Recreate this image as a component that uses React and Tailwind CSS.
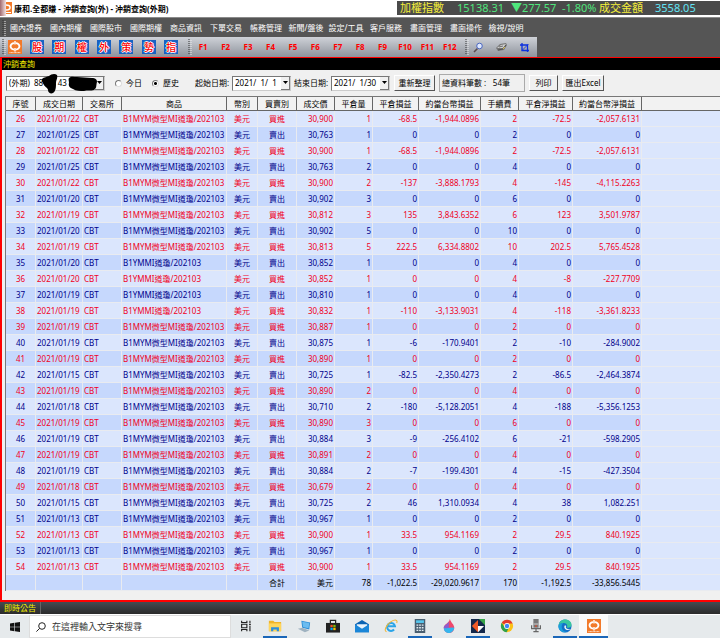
import React, { useState } from 'react';

const menus = [
  '國內證券', '國內期權', '國際股市', '國際期權', '商品資訊', '下單交易', '帳務管理',
  '新聞/盤後', '設定/工具', '客戶服務', '畫面管理', '畫面操作', '檢視/說明',
];

const shortcuts = ['股', '期', '權', '外', '策', '勢', '指'];
const fnKeys = ['F1', 'F2', 'F3', 'F4', 'F5', 'F6', 'F7', 'F8', 'F9', 'F10', 'F11', 'F12'];

const columns = [
  { label: '序號',           width: 'w-[30px]',  align: 'text-center' },
  { label: '成交日期',       width: 'w-[47px]',  align: 'text-left'   },
  { label: '交易所',         width: 'w-[39px]',  align: 'text-left'   },
  { label: '商品',           width: 'w-[105px]', align: 'text-left'   },
  { label: '幣別',           width: 'w-[31px]',  align: 'text-center' },
  { label: '買賣別',         width: 'w-[39px]',  align: 'text-center' },
  { label: '成交價',         width: 'w-[38px]',  align: 'text-right'  },
  { label: '平倉量',         width: 'w-[38px]',  align: 'text-right'  },
  { label: '平倉損益',       width: 'w-[46px]',  align: 'text-right'  },
  { label: '約當台幣損益',   width: 'w-[62px]',  align: 'text-right'  },
  { label: '手續費',         width: 'w-[38px]',  align: 'text-right'  },
  { label: '平倉淨損益',     width: 'w-[54px]',  align: 'text-right'  },
  { label: '約當台幣淨損益', width: 'w-[69px]',  align: 'text-right'  },
];

const MICRO = 'B1MYM微型MI道瓊/202103';
const MINI = 'B1YMMI道瓊/202103';

// no, day, product, price, qty, pl, pl (TWD), fee, net, net (TWD)
const trades = [
  [26, '22', MICRO, '30,900', '1', '-68.5', '-1,944.0896', '2', '-72.5', '-2,057.6131'],
  [27, '25', MICRO, '30,763', '1', '0', '0', '2', '0', '0'],
  [28, '22', MICRO, '30,900', '1', '-68.5', '-1,944.0896', '2', '-72.5', '-2,057.6131'],
  [29, '25', MICRO, '30,763', '2', '0', '0', '4', '0', '0'],
  [30, '22', MICRO, '30,900', '2', '-137', '-3,888.1793', '4', '-145', '-4,115.2263'],
  [31, '20', MICRO, '30,902', '3', '0', '0', '6', '0', '0'],
  [32, '19', MICRO, '30,812', '3', '135', '3,843.6352', '6', '123', '3,501.9787'],
  [33, '20', MICRO, '30,902', '5', '0', '0', '10', '0', '0'],
  [34, '19', MICRO, '30,813', '5', '222.5', '6,334.8802', '10', '202.5', '5,765.4528'],
  [35, '20', MINI, '30,852', '1', '0', '0', '4', '0', '0'],
  [36, '20', MINI, '30,852', '1', '0', '0', '4', '-8', '-227.7709'],
  [37, '19', MINI, '30,810', '1', '0', '0', '4', '0', '0'],
  [38, '19', MINI, '30,832', '1', '-110', '-3,133.9031', '4', '-118', '-3,361.8233'],
  [39, '19', MICRO, '30,887', '1', '0', '0', '2', '0', '0'],
  [40, '19', MICRO, '30,875', '1', '-6', '-170.9401', '2', '-10', '-284.9002'],
  [41, '19', MICRO, '30,890', '1', '0', '0', '2', '0', '0'],
  [42, '15', MICRO, '30,725', '1', '-82.5', '-2,350.4273', '2', '-86.5', '-2,464.3874'],
  [43, '19', MICRO, '30,890', '2', '0', '0', '4', '0', '0'],
  [44, '18', MICRO, '30,710', '2', '-180', '-5,128.2051', '4', '-188', '-5,356.1253'],
  [45, '19', MICRO, '30,890', '3', '0', '0', '6', '0', '0'],
  [46, '19', MICRO, '30,884', '3', '-9', '-256.4102', '6', '-21', '-598.2905'],
  [47, '19', MICRO, '30,891', '2', '0', '0', '4', '0', '0'],
  [48, '19', MICRO, '30,884', '2', '-7', '-199.4301', '4', '-15', '-427.3504'],
  [49, '18', MICRO, '30,679', '2', '0', '0', '4', '0', '0'],
  [50, '15', MICRO, '30,725', '2', '46', '1,310.0934', '4', '38', '1,082.251'],
  [51, '13', MICRO, '30,967', '1', '0', '0', '2', '0', '0'],
  [52, '13', MICRO, '30,900', '1', '33.5', '954.1169', '2', '29.5', '840.1925'],
  [53, '13', MICRO, '30,967', '1', '0', '0', '2', '0', '0'],
  [54, '13', MICRO, '30,900', '1', '33.5', '954.1169', '2', '29.5', '840.1925'],
];

const totals = ['', '', '', '', '', '合計', '美元', '78', '-1,022.5', '-29,020.9617', '170', '-1,192.5', '-33,856.5445'];

// Legs are listed in pairs; between 39 and 50 the buy leg has the odd number
function isBuy(no) {
  const flipped = no >= 39 && no <= 50;
  return no % 2 === (flipped ? 1 : 0);
}

const toCells = ([no, day, product, ...rest]) => [
  no, `2021/01/${day}`, 'CBT', product, '美元', isBuy(no) ? '買進' : '賣出', ...rest,
];

function BrandIcon({ className }) {
  return (
    <svg className={className} viewBox="0 0 14 14" aria-hidden="true">
      <rect width="14" height="14" fill="#f27a2a" />
      <path d="M6.3 2.2C3.6 2.2 1.6 4 1.6 6.3s2 4.1 4.7 4.1V8.7C4.7 8.7 3.5 7.7 3.5 6.3S4.7 3.9 6.3 3.9zM7.7 2.2c2.7 0 4.7 1.8 4.7 4.1s-2 4.1-4.7 4.1V8.7c1.6 0 2.8-1 2.8-2.4S9.3 3.9 7.7 3.9z" fill="#fff" />
      <path d="M6.3 1h1.4v3.6H6.3zM6.3 8h1.4v3.400H6.3z" fill="#fff" />
      <path d="M1.5 12.6h11" stroke="#fff" strokeWidth=".8" strokeDasharray="1 .4" />
    </svg>
  );
}

function Grip() {
  return (
    <svg className="w-1 h-4 shrink-0" viewBox="0 0 4 16" aria-hidden="true">
      <path d="M1 0v16" stroke="#333" strokeWidth="1" strokeDasharray="1 1" />
      <path d="M3 1v15" stroke="#eee" strokeWidth="1" strokeDasharray="1 1" />
    </svg>
  );
}

function TitleBar() {
  return (
    <header className="flex items-start h-[18px] bg-white border-b border-[#8a8a8a]">
      <div className="w-1.5 h-4 shrink-0 bg-linear-to-r from-[#a06a70] to-[#f3e4e4]" />
      <svg className="w-1.5 h-3 mt-0.5 shrink-0" viewBox="0 0 6 12" aria-hidden="true">
        <path d="M0 0h6v12H0z" fill="#f27a2a" />
        <path d="M0 3c3 0 4 1 4 2.500S3 8 0 8" fill="none" stroke="#fff" strokeWidth="1.500" />
        <path d="M0 10.500h5" stroke="#fff" />
      </svg>
      <h1 className="ml-0.5 grow text-[8px] leading-[17px] font-bold whitespace-nowrap">康和.全都賺 - 沖銷查詢(外) - 沖銷查詢(外期)</h1>
      <div className="flex items-center w-[323px] h-[14px] mt-px bg-[#4a4a4a] text-[11px] leading-[14px] text-[#4fe57c]">
        <span className="w-[60px] pl-[3px] text-[#f6f03a]">加權指數</span>
        <span className="w-[54px]">15138.31</span>
        <span className="w-[51px]">▼277.57</span>
        <span className="w-[37px]">-1.80%</span>
        <span className="w-[56px] text-[#f6f03a]">成交金額</span>
        <span className="text-[#62e4f5]">3558.05</span>
      </div>
    </header>
  );
}

function MenuBar() {
  return (
    <nav className="flex items-center h-[19px] pl-0.5 bg-[#555] text-white text-[8px]">
      <Grip />
      {menus.map((menu) => (
        <button key={menu} className="w-[40px] shrink-0 text-center whitespace-nowrap">{menu}</button>
      ))}
    </nav>
  );
}

function Toolbar() {
  return (
    <div className="flex h-5 bg-[#555]">
      <div className="flex items-center w-[537px] pl-0.5 bg-linear-to-b from-[#cfd2d8] to-[#8e939c]">
        <Grip />
        <button className="ml-0.5 w-[14px]" aria-label="首頁"><BrandIcon className="size-[14px]" /></button>
        <div className="flex justify-between w-[148px] ml-2">
          {shortcuts.map((label) => (
            <button
              key={label}
              className="flex items-center justify-center size-[14px] bg-[#1762c4] text-[#f00] text-[10px] leading-[14px] font-medium [text-shadow:1px_0_0_#fff,-1px_0_0_#fff,0_1px_0_#fff,0_-1px_0_#fff]"
            >
              {label}
            </button>
          ))}
        </div>
        <div className="flex ml-2.5"><Grip /></div>
        <div className="flex w-[269px]">
          {fnKeys.map((key) => (
            <button key={key} className="flex-1 text-[8px] font-bold text-[#f00]">{key}</button>
          ))}
        </div>
        <div className="flex ml-1"><Grip /></div>
        <div className="flex items-center gap-3 ml-1">
          <button aria-label="搜尋">
            <svg className="size-[11px]" viewBox="0 0 11 11" fill="none">
              <path d="M1 10l3.5-3.5" stroke="#5a4a50" strokeWidth="1.6" />
              <circle cx="6.5" cy="4" r="2.8" fill="#dfe9ff" stroke="#4a66c0" />
            </svg>
          </button>
          <button aria-label="列印">
            <svg className="size-[11px]" viewBox="0 0 11 11">
              <path d="M0 6l4-4 6-1 1 2-3 5-6 1z" fill="#777" />
              <path d="M1 6l4-3 5-1-3 4z" fill="#d0d0d0" />
              <path d="M3 5l4-1M2 8l5-1 3-4" stroke="#444" strokeWidth=".7" fill="none" />
              <path d="M7 7l2-2" stroke="#d9c04a" />
            </svg>
          </button>
          <button aria-label="裁切">
            <svg className="size-[11px]" viewBox="0 0 11 11" fill="none" stroke="#0a2fe0" strokeWidth="1.3">
              <path d="M3 1v7.500h7M1 3h7.500v7" />
              <path d="M3 8.500L9.500 2" strokeWidth=".8" />
            </svg>
          </button>
        </div>
      </div>
    </div>
  );
}

function DropArrow() {
  return (
    <svg className="w-[5px] h-[3px]" viewBox="0 0 5 3" aria-hidden="true"><path d="M0 0h5L2.5 3z" fill="#000" /></svg>
  );
}

function DateField({ id, label, value, className }) {
  return (
    <div className={`flex items-center gap-[3px] ${className}`}>
      <label htmlFor={id} className="w-[34px] whitespace-nowrap">{label}</label>
      <div className="flex w-[59px] h-[15px] bg-white border border-t-[#777] border-l-[#777] border-r-[#ccc] border-b-[#ccc]">
        <input id={id} defaultValue={value} className="w-[48px] min-w-0 pl-0.5 text-[8px] outline-none" />
        <button aria-label={`選擇${label}`} className="flex grow items-center justify-center bg-[#f0f0f0] border-r border-b border-[#777]">
          <DropArrow />
        </button>
      </div>
    </div>
  );
}

const raised = 'h-4 border border-t-white border-l-white border-r-[#555] border-b-[#555] bg-[#f0f0f0] text-center whitespace-nowrap';
const radio = 'size-[7px] appearance-none rounded-full bg-white border border-t-[#777] border-l-[#777] border-r-[#ddd] border-b-[#ddd] checked:bg-[radial-gradient(circle,#000_0_1px,#fff_2px)]';

function FilterBar() {
  const [range, setRange] = useState('history');

  return (
    <form className="flex items-center h-[26px] pl-1 text-[8px] text-black" onSubmit={(e) => e.preventDefault()}>
      <div className="relative w-[99px] h-[15px] shrink-0">
        <select aria-label="帳號" className="w-full h-full pl-0.5 appearance-none bg-white border border-t-[#777] border-l-[#777] border-r-[#ccc] border-b-[#ccc] text-[8px] outline-none">
          <option>{'(外期)\u00a0\u00a088\u00a0\u00a0\u00a0\u00a0\u00a0\u00a0\u00a043'}</option>
        </select>
        <span className="absolute right-px top-px w-[9px] h-[13px] flex items-center justify-center bg-[#f0f0f0] border-r border-b border-[#777] pointer-events-none">
          <DropArrow />
        </span>
        {/* account number is blacked out */}
        <svg className="absolute left-9 -top-1 w-[58px] h-[22px] pointer-events-none" viewBox="0 0 58 22" aria-hidden="true">
          <path d="M0 7c2-2 5-2 7-3 2-2 6-3 8-1 1 3-1 5-1 8 0 4 0 8-3 10-2 1-5 0-5-3 0-2-3-3-4-5s-3-4-2-6z" fill="#000" />
          <path d="M27 6c2-2 5-1 8-1 5 0 10 1 15 1 3 0 5 1 5 4-1 3 0 6-3 8-3 1-7 0-10 1-4 0-8 0-11-2-3-1-5-3-4-6 0-2-1-4 0-5z" fill="#000" />
        </svg>
      </div>

      <label className="flex items-center gap-1 ml-2.5">
        <input type="radio" name="range" checked={range === 'today'} onChange={() => setRange('today')} className={radio} />
        今日
      </label>
      <label className="flex items-center gap-1 ml-2.5">
        <input type="radio" name="range" checked={range === 'history'} onChange={() => setRange('history')} className={radio} />
        歷史
      </label>

      <DateField id="from" label="起始日期:" value="2021/  1/  1" className="ml-4" />
      <DateField id="to" label="結束日期:" value="2021/  1/30" className="ml-[3px]" />

      <button className={`${raised} w-[41px] ml-1`}>重新整理</button>
      <div className="flex items-center justify-between w-[86px] h-[18px] pl-0.5 pr-3.5 mx-1 border border-[#aaa] whitespace-nowrap">
        <span>總資料筆數 :</span>
        <span>54筆</span>
      </div>
      <button className={`${raised} w-[29px]`}>列印</button>
      <button className={`${raised} w-[42px] ml-1`}>匯出Excel</button>
    </form>
  );
}

function Row({ cells, color, shade }) {
  return (
    <tr className={`h-4 ${color} ${shade}`}>
      {cells.map((cell, i) => (
        <td key={columns[i].label} className={`p-0 px-px border-r border-b border-[#e9ebf0] leading-[15px] overflow-hidden ${columns[i].align}`}>
          {cell}
        </td>
      ))}
      <td className="p-0 bg-[#dbe6fd] border-b border-[#e9ebf0]" />
    </tr>
  );
}

function TradeTable() {
  return (
    <div className="ml-[3px] border-l border-t border-[#777]">
      <table className="w-full table-fixed border-separate border-spacing-0 text-[8px] whitespace-nowrap">
        <thead>
          <tr className="h-[14px] bg-[#f2f2f2] text-black">
            {columns.map(({ label, width }) => (
              <th key={label} className={`${width} p-0 leading-[13px] font-normal text-center border-r border-b border-[#666]`}>{label}</th>
            ))}
            <th className="p-0 border-b border-[#666]" aria-label="空白" />
          </tr>
        </thead>
        <tbody>
          {trades.map((trade, i) => (
            <Row
              key={trade[0]}
              cells={toCells(trade)}
              color={isBuy(trade[0]) ? 'text-[#f0001c]' : 'text-[#00008a]'}
              shade={i % 2 === 0 ? 'bg-[#dbe6fd]' : 'bg-[#c6d8fd]'}
            />
          ))}
          <Row cells={totals} color="text-black" shade="bg-[#c6d8fd]" />
        </tbody>
      </table>
    </div>
  );
}

const tasks = [
  { name: '工作檢視', icon: (
    <g fill="none" stroke="#222" strokeWidth="1.3">
      <path d="M3 2v2h6V2M3 14v-2h6v2M3 6h6v4H3zM12.5 2v3M12.5 8v6" /><path d="M11.5 6.5h2" />
    </g>
  ) },
  { name: '檔案總管', open: true, icon: (
    <g>
      <path d="M1 2h5l1.5 1.5H15V14H1z" fill="#f0b429" />
      <path d="M1 5h14v9H1z" fill="#ffd65c" />
      <path d="M3.5 14V9.5h9V14H10v-2H6v2z" fill="#2f8fdc" />
    </g>
  ) },
  { name: '遠端桌面', icon: (
    <g>
      <path d="M5 2l10 2-1 8-8-2z" fill="#2f8ed6" /><path d="M6 3l8 1.700-.8 6L7 9z" fill="#6bbcf0" />
      <path d="M1 11l5-1 8 3-5 2z" fill="#9fb2c0" />
    </g>
  ) },
  { name: 'Microsoft Store', icon: (
    <g>
      <path d="M0 4.5h16V15.500H0z" fill="#222" /><path d="M5 5V1.500h6V5" fill="none" stroke="#222" strokeWidth="1.4" />
      <path d="M5 6.700h2.700v2.700H5z" fill="#f25022" /><path d="M8.300 6.700H11v2.700H8.300z" fill="#7fba00" />
      <path d="M5 10h2.700v2.700H5z" fill="#00a4ef" /><path d="M8.300 10H11v2.700H8.300z" fill="#ffb900" />
    </g>
  ) },
  { name: '郵件', icon: (
    <g>
      <path d="M0 6l8-5 8 5v9H0z" fill="#0a63b4" /><path d="M2 6h12v4l-6 3-6-3z" fill="#e8f3fc" />
      <path d="M0 6l8 5 8-5v9H0z" fill="#1a86d8" />
    </g>
  ) },
  { name: 'Internet Explorer', icon: (
    <g fill="none">
      <path d="M4 8.300h8.500A4.500 4.500 0 1 0 11.500 12" stroke="#2ba5e8" strokeWidth="2.300" />
      <path d="M3 14.500C-1 14 3 6 8 3s8-2 6.500 1.500" stroke="#f2b632" strokeWidth="1.200" />
    </g>
  ) },
  { name: '小算盤', open: true, icon: (
    <g>
      <path d="M2 0h12v16H2z" fill="#4a5f70" /><path d="M3.5 1.500h9v3h-9z" fill="#56c7ee" />
      <path d="M4 7h8M4 10h8M4 13h8" stroke="#e5edf2" strokeWidth="1.6" strokeDasharray="2 1" />
    </g>
  ) },
  { name: '小畫家 3D', icon: (
    <g>
      <path d="M9 0c1 4 5 6 5 10a6 6 0 0 1-12 0c0-4 6-5 7-10z" fill="#f0486c" />
      <path d="M2 10c0-3 4-4 6-7 0 4-1 6 1 9-3 1-6 1-7-2z" fill="#8a5fd0" />
      <path d="M2 10.500c3 1 7-2 12-.5 0 3-3 6-6 6s-6-2-6-5.500z" fill="#35b5ee" />
    </g>
  ) },
  { name: '看盤軟體', open: true, icon: (
    <g>
      <path d="M0 0h16v16H0z" fill="#14284b" /><path d="M1 8l7-7v14z" fill="#f05a28" />
      <path d="M9 0h7v7z" fill="#37a548" /><path d="M8 8h7l-7 7z" fill="#fff" />
    </g>
  ) },
  { name: 'Chrome', icon: (
    <g>
      <circle cx="8" cy="8" r="7" fill="#fbc116" />
      <path d="M8 8L2 4.400A7 7 0 0 1 14.500 5H8z" fill="#e33b2e" />
      <path d="M2 4.400A7 7 0 0 0 7.500 15l3-5.500L5 9z" fill="#2da14c" />
      <circle cx="8" cy="8" r="3.300" fill="#fff" /><circle cx="8" cy="8" r="2.500" fill="#4285f4" />
    </g>
  ) },
  { name: '錄音機', icon: (
    <g>
      <path d="M5 0h6v10H5z" fill="#777" /><path d="M5 5h6v1.500H5z" fill="#bbb" />
      <path d="M3 7v4h10V7M8 11v4M5 14.500h6" fill="none" stroke="#666" strokeWidth="1.4" />
      <circle cx="8" cy="8" r="1" fill="#e04a2a" />
    </g>
  ) },
  { name: 'Edge', open: true, icon: (
    <g>
      <circle cx="8" cy="8" r="7.500" fill="#1470c8" />
      <path d="M.5 8C1 3 4 .5 8 .5c5 0 7.500 3 7.500 6 0 2-2 3.500-4 3.500-1 0-2-.5-1-1.500C11 6 9 4.500 6.500 4.500 3.500 4.500 1 6 .5 8z" fill="#39c6a0" />
      <path d="M.5 8C1 5.500 3.500 4.500 6 5c-2 1-2.500 5-.5 7.500S11 15 12 14.400C6 17 0 13 .5 8z" fill="#1aa0dc" />
      <path d="M8 7c-2 2 0 5.500 3 5.500 1.500 0 3-.5 4-1-1 0-4 .3-5.500-1C8.500 9.500 9 8.500 9.500 8z" fill="#f0f4f6" />
    </g>
  ) },
];

function Taskbar() {
  return (
    <footer className="flex h-6 bg-[#e6eaec] border-t border-white">
      <button aria-label="開始" className="w-[29px] flex items-center justify-center">
        <svg className="size-2.5" viewBox="0 0 10 10" fill="#111">
          <path d="M0 1.400L4.400.8v3.900H0zM5 .7L10 0v4.700H5zM0 5.300h4.400v3.900L0 8.600zM5 5.300h5V10l-5-.7z" />
        </svg>
      </button>
      <div className="flex items-center w-[202px] px-1.5 bg-white border border-[#ddd]">
        <svg className="size-2.5 shrink-0" viewBox="0 0 10 10" fill="none" stroke="#222">
          <circle cx="6" cy="4" r="3.300" /><path d="M3.600 6.400L.4 9.600" />
        </svg>
        <input
          aria-label="搜尋" placeholder="在這裡輸入文字來搜尋"
          className="min-w-0 grow ml-1.5 text-[9px] outline-none placeholder:text-[#333]"
        />
      </div>
      {tasks.map(({ name, icon, open }) => (
        <button key={name} aria-label={name} className="flex items-center justify-center w-[29px] px-0.5">
          <span className={`flex items-center justify-center w-6 h-full border-b-2 ${open ? 'border-[#1a66b8]' : 'border-transparent'}`}>
            <svg className="size-[14px]" viewBox="0 0 16 16">{icon}</svg>
          </span>
        </button>
      ))}
      <button aria-label="康和" className="flex items-center justify-center w-[29px] bg-[#fafafa] border-b-2 border-[#1a66b8]">
        <BrandIcon className="size-[14px]" />
      </button>
    </footer>
  );
}

export default function App() {
  return (
    <div className="min-h-screen flex flex-col bg-[#f0f0f0] font-['Noto_Sans','Noto_Sans_CJK_TC',sans-serif]">
      <TitleBar />
      <MenuBar />
      <Toolbar />
      <main className="grow border-t border-l-2 border-b-2 border-[#f00]">
        <h2 className="h-3 bg-black pl-px text-[8px] leading-3 text-[#f4f000]">沖銷查詢</h2>
        <FilterBar />
        <TradeTable />
      </main>
      <div className="flex items-center h-3 bg-linear-to-b from-[#444b52] to-[#2b2b2b] text-[8px] leading-3 text-[#f4f000]">
        <span className="pl-1 pr-1 border-r border-[#666]">即時公告</span>
      </div>
      <Taskbar />
    </div>
  );
}
